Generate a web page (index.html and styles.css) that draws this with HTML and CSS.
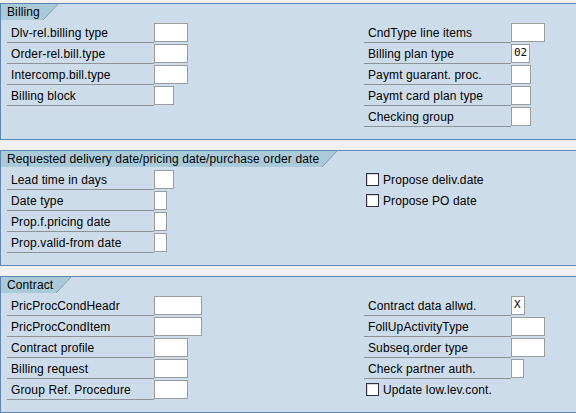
FILE: index.html
```html
<!DOCTYPE html>
<html>
<head>
<meta charset="utf-8">
<link rel="stylesheet" href="styles.css">
</head>
<body>
<section class="group">
  <div class="tab"><span class="tab-text">Billing</span><svg class="tab-end" width="15" height="16" viewBox="0 0 15 16"><polygon points="0,0 15,0 0,16" fill="#a9cbd9"/><line x1="15" y1="0" x2="0" y2="16" stroke="#7d9db3" stroke-width="1"/></svg></div>
  <div class="body">
    <div class="col">
      <div class="row"><span class="label">Dlv-rel.billing type</span><span class="field w34"></span></div>
      <div class="row"><span class="label">Order-rel.bill.type</span><span class="field w34"></span></div>
      <div class="row"><span class="label">Intercomp.bill.type</span><span class="field w34"></span></div>
      <div class="row"><span class="label">Billing block</span><span class="field w20"></span></div>
    </div>
    <div class="col">
      <div class="row"><span class="label">CndType line items</span><span class="field w34"></span></div>
      <div class="row"><span class="label">Billing plan type</span><span class="field w19">02</span></div>
      <div class="row"><span class="label">Paymt guarant. proc.</span><span class="field w20"></span></div>
      <div class="row"><span class="label">Paymt card plan type</span><span class="field w20"></span></div>
      <div class="row"><span class="label">Checking group</span><span class="field w20"></span></div>
    </div>
  </div>
</section>

<section class="group">
  <div class="tab"><span class="tab-text">Requested delivery date/pricing date/purchase order date</span><svg class="tab-end" width="15" height="16" viewBox="0 0 15 16"><polygon points="0,0 15,0 0,16" fill="#a9cbd9"/><line x1="15" y1="0" x2="0" y2="16" stroke="#7d9db3" stroke-width="1"/></svg></div>
  <div class="body">
    <div class="col">
      <div class="row"><span class="label">Lead time in days</span><span class="field w20"></span></div>
      <div class="row"><span class="label">Date type</span><span class="field w13"></span></div>
      <div class="row"><span class="label">Prop.f.pricing date</span><span class="field w13"></span></div>
      <div class="row"><span class="label">Prop.valid-from date</span><span class="field w13"></span></div>
    </div>
    <div class="col">
      <div class="row"><span class="check"></span><span class="check-label">Propose deliv.date</span></div>
      <div class="row"><span class="check"></span><span class="check-label">Propose PO date</span></div>
    </div>
  </div>
</section>

<section class="group">
  <div class="tab"><span class="tab-text">Contract</span><svg class="tab-end" width="15" height="16" viewBox="0 0 15 16"><polygon points="0,0 15,0 0,16" fill="#a9cbd9"/><line x1="15" y1="0" x2="0" y2="16" stroke="#7d9db3" stroke-width="1"/></svg></div>
  <div class="body">
    <div class="col">
      <div class="row"><span class="label">PricProcCondHeadr</span><span class="field w48"></span></div>
      <div class="row"><span class="label">PricProcCondItem</span><span class="field w48"></span></div>
      <div class="row"><span class="label">Contract profile</span><span class="field w34"></span></div>
      <div class="row"><span class="label">Billing request</span><span class="field w34"></span></div>
      <div class="row"><span class="label">Group Ref. Procedure</span><span class="field w34"></span></div>
    </div>
    <div class="col">
      <div class="row"><span class="label">Contract data allwd.</span><span class="field w14">X</span></div>
      <div class="row"><span class="label">FollUpActivityType</span><span class="field w34"></span></div>
      <div class="row"><span class="label">Subseq.order type</span><span class="field w34"></span></div>
      <div class="row"><span class="label">Check partner auth.</span><span class="field w13"></span></div>
      <div class="row"><span class="check"></span><span class="check-label">Update low.lev.cont.</span></div>
    </div>
  </div>
</section>
</body>
</html>
```

FILE: styles.css
```css
html, body {
  margin: 0;
  padding: 0;
}
body {
  background: #f0f0f0;
  padding-top: 3px;
  font-family: "Liberation Sans", Arial, sans-serif;
  font-size: 12px;
  letter-spacing: 0.12px;
  color: #000;
  overflow: hidden;
}
.group {
  background: #cddcea;
  border-top: 1px solid #5f86b1;
  border-bottom: 1px solid #5f86b1;
  border-left: 1px solid #5f86b1;
  margin-bottom: 10px;
}
.tab {
  display: flex;
  height: 16px;
}
.tab-text {
  background: #a9cbd9;
  height: 16px;
  line-height: 16px;
  padding: 0 3px 0 6px;
  white-space: nowrap;
}
.tab-end {
  display: block;
}
.body {
  display: grid;
  grid-template-columns: 357px 1fr;
  padding: 3px 0 11px 6px;
}
.col {
  display: flex;
  flex-direction: column;
}
.row {
  display: flex;
  align-items: flex-start;
  height: 21px;
}
.label {
  box-sizing: border-box;
  width: 147px;
  height: 20px;
  line-height: 20px;
  padding-left: 4px;
  border-bottom: 1px solid #8f9295;
  white-space: nowrap;
}
.field {
  box-sizing: border-box;
  height: 19px;
  background: #fff;
  border: 1px solid #9c9c9c;
  font-family: "DejaVu Sans Mono", "Liberation Mono", monospace;
  font-size: 11px;
  letter-spacing: 0;
  line-height: 16px;
  padding-left: 2px;
}
.w13 { width: 13px; }
.w14 { width: 14px; }
.w19 { width: 19px; }
.w20 { width: 20px; }
.w34 { width: 34px; }
.w48 { width: 48px; }
.check {
  box-sizing: border-box;
  width: 13px;
  height: 13px;
  margin: 3px 0 0 2px;
  background: #fff;
  border: 1px solid #2f3040;
  box-shadow: inset 1px 1px 0 #d8d8e0;
}
.check-label {
  margin-left: 4px;
  line-height: 20px;
  white-space: nowrap;
}
```
